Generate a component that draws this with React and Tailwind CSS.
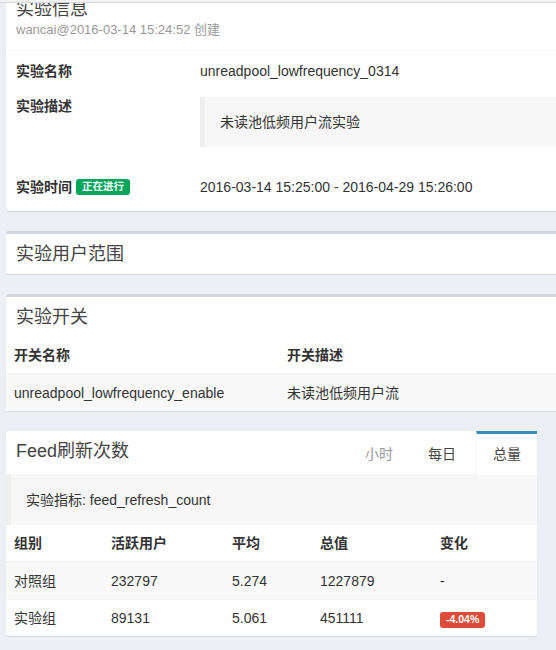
const font = { fontFamily: '"Liberation Sans", "Noto Sans CJK SC", sans-serif' };

function Label({ color, children }) {
  return (
    <span className={`inline-block rounded-[3px] px-[6px] pt-[2px] pb-[3px] text-[10.5px] font-bold leading-[11px] text-white ${color}`}>
      {children}
    </span>
  );
}

function Box({ className = '', children }) {
  return (
    <div className={`w-[600px] rounded-[3px] border-t-[3px] border-[#d2d6de] bg-white shadow-[0_1px_1px_rgba(0,0,0,0.1)] ${className}`}>
      {children}
    </div>
  );
}

function BoxTitle({ children }) {
  return (
    <div className="p-[10px]">
      <h3 className="text-[18px] leading-[20px] text-[#444]">{children}</h3>
    </div>
  );
}

const metrics = [
  { group: '对照组', active: '232797', avg: '5.274', total: '1227879', change: '-' },
  { group: '实验组', active: '89131', avg: '5.061', total: '451111', change: '-4.04%' },
];

export default function App() {
  return (
    <div style={font} className="relative h-[650px] w-[556px] overflow-hidden bg-[#ecf0f5] text-[14px] text-[#333]">
      <div className="pl-[6px]">
        {/* 实验信息 */}
        <Box className="-mt-[13px] mb-[20px]">
          <div className="border-b border-[#f4f4f4] px-[10px] pt-[10px] pb-[10px]">
            <h3 className="text-[18px] leading-[18px] text-[#444]">实验信息</h3>
            <div className="mt-[2px] text-[13px] leading-[20px] text-[#999]">wancai@2016-03-14 15:24:52 创建</div>
          </div>
          <div className="px-[10px] pt-[10px] pb-[14px]">
            <div className="grid grid-cols-[184px_1fr] leading-[20px]">
              <div className="font-bold">实验名称</div>
              <div>unreadpool_lowfrequency_0314</div>
            </div>
            <div className="mt-[15px] grid grid-cols-[184px_1fr] leading-[20px]">
              <div className="font-bold">实验描述</div>
              <div className="mt-[1px] border-l-[5px] border-[#eee] bg-[#f7f7f7] py-[15px] pl-[15px]">未读池低频用户流实验</div>
            </div>
            <div className="mt-[30px] grid grid-cols-[184px_1fr] leading-[20px]">
              <div className="flex items-center gap-[4px] font-bold">
                实验时间 <Label color="bg-[#00a65a]">正在进行</Label>
              </div>
              <div>2016-03-14 15:25:00 - 2016-04-29 15:26:00</div>
            </div>
          </div>
        </Box>

        {/* 实验用户范围 */}
        <Box className="mb-[20px]">
          <BoxTitle>实验用户范围</BoxTitle>
        </Box>

        {/* 实验开关 */}
        <Box className="mb-[20px]">
          <BoxTitle>实验开关</BoxTitle>
          <table className="w-full border-collapse text-left leading-[20px]">
            <thead>
              <tr className="border-b-2 border-[#f4f4f4]">
                <th className="w-[273px] p-[8px] font-bold">开关名称</th>
                <th className="p-[8px] font-bold">开关描述</th>
              </tr>
            </thead>
            <tbody>
              <tr className="bg-[#f9f9f9]">
                <td className="p-[8px]">unreadpool_lowfrequency_enable</td>
                <td className="p-[8px]">未读池低频用户流</td>
              </tr>
            </tbody>
          </table>
        </Box>

        {/* Feed刷新次数 */}
        <div className="w-[531px] rounded-[3px] bg-white shadow-[0_1px_1px_rgba(0,0,0,0.1)]">
          <div className="flex">
            <div className="flex flex-1 items-start justify-between border-b border-[#f4f4f4]">
              <h3 className="pl-[10px] pt-[11px] text-[18px] leading-[18px] text-[#444]">Feed刷新次数</h3>
              <ul className="flex gap-[5px] pr-[5px]">
                <li className="border-t-[3px] border-transparent px-[15px] py-[10px] leading-[20px] text-[#999]">小时</li>
                <li className="border-t-[3px] border-transparent px-[15px] py-[10px] leading-[20px] text-[#444]">每日</li>
              </ul>
            </div>
            <div className="border-t-[3px] border-l border-[#3c8dbc] border-l-[#f4f4f4] bg-white px-[16px] pt-[10px] pb-[11px] leading-[20px] text-[#444]">总量</div>
          </div>
          <div className="border-l-[5px] border-[#eee] bg-[#f7f7f7] py-[15px] pl-[15px] leading-[20px]">
            实验指标: feed_refresh_count
          </div>
          <table className="w-full border-collapse text-left leading-[20px]">
            <thead>
              <tr className="border-b-2 border-[#f4f4f4]">
                <th className="w-[97px] p-[8px] font-bold">组别</th>
                <th className="w-[121px] p-[8px] font-bold">活跃用户</th>
                <th className="w-[88px] p-[8px] font-bold">平均</th>
                <th className="w-[120px] p-[8px] font-bold">总值</th>
                <th className="p-[8px] font-bold">变化</th>
              </tr>
            </thead>
            <tbody>
              {metrics.map((m, i) => (
                <tr key={m.group} className={i % 2 === 0 ? 'bg-[#f9f9f9]' : 'border-t border-[#f4f4f4]'}>
                  <td className="p-[8px]">{m.group}</td>
                  <td className="p-[8px]">{m.active}</td>
                  <td className="p-[8px]">{m.avg}</td>
                  <td className="p-[8px]">{m.total}</td>
                  <td className="p-[8px]">
                    {m.change === '-' ? '-' : <Label color="bg-[#dd4b39]">{m.change}</Label>}
                  </td>
                </tr>
              ))}
            </tbody>
          </table>
        </div>
      </div>
      {/* top edge of the fixed header above the scrolled page */}
      <div className="absolute left-0 right-0 top-0 h-[3px] border-b border-[#d2d6de] bg-[#f4f4f4]" />
    </div>
  );
}
